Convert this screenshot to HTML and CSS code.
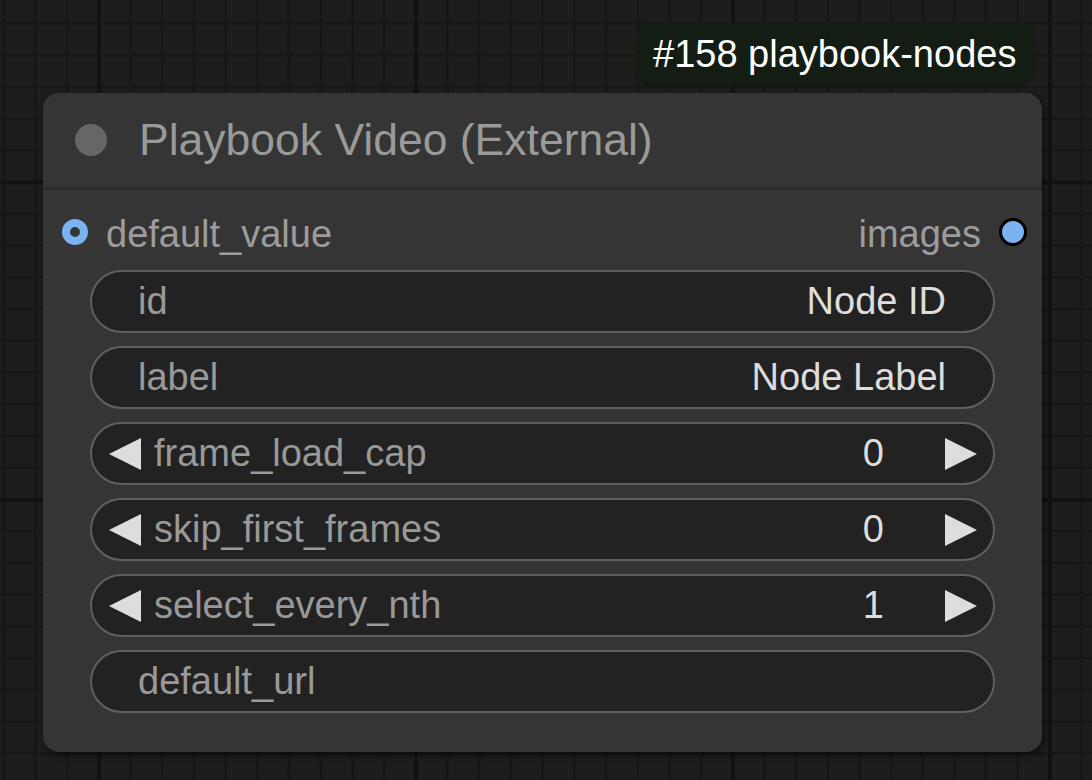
FILE: index.html
```html
<!DOCTYPE html>
<html>
<head>
<meta charset="utf-8">
<link rel="stylesheet" href="styles.css">
</head>
<body>
<div class="canvas">
  <div class="badge">#158 playbook-nodes</div>
  <div class="node">
    <div class="title">
      <span class="title-dot"></span>
      <span class="title-text">Playbook Video (External)</span>
    </div>
    <div class="slots">
      <div class="slot-in">
        <span class="dot-in"></span>
        <span class="slot-label">default_value</span>
      </div>
      <div class="slot-out">
        <span class="slot-label">images</span>
        <span class="dot-out"></span>
      </div>
    </div>
    <div class="widgets">
      <div class="widget text-widget">
        <span class="w-label">id</span>
        <span class="w-value">Node ID</span>
      </div>
      <div class="widget text-widget">
        <span class="w-label">label</span>
        <span class="w-value">Node Label</span>
      </div>
      <div class="widget num-widget">
        <svg class="arrow" viewBox="0 0 32 32"><polygon points="0,16 32,0 32,32"/></svg>
        <span class="w-label">frame_load_cap</span>
        <span class="w-value">0</span>
        <svg class="arrow" viewBox="0 0 32 32"><polygon points="32,16 0,0 0,32"/></svg>
      </div>
      <div class="widget num-widget">
        <svg class="arrow" viewBox="0 0 32 32"><polygon points="0,16 32,0 32,32"/></svg>
        <span class="w-label">skip_first_frames</span>
        <span class="w-value">0</span>
        <svg class="arrow" viewBox="0 0 32 32"><polygon points="32,16 0,0 0,32"/></svg>
      </div>
      <div class="widget num-widget">
        <svg class="arrow" viewBox="0 0 32 32"><polygon points="0,16 32,0 32,32"/></svg>
        <span class="w-label">select_every_nth</span>
        <span class="w-value">1</span>
        <svg class="arrow" viewBox="0 0 32 32"><polygon points="32,16 0,0 0,32"/></svg>
      </div>
      <div class="widget text-widget">
        <span class="w-label">default_url</span>
        <span class="w-value"></span>
      </div>
    </div>
  </div>
</div>
</body>
</html>
```
FILE: styles.css
```css
html, body {
  margin: 0;
  padding: 0;
}
body {
  width: 1092px;
  height: 780px;
  overflow: hidden;
  background-color: #1d1d1d;
  font-family: "Liberation Sans", Arial, sans-serif;
}
.canvas {
  position: relative;
  width: 1092px;
  height: 780px;
  background-color: #1d1d1d;
  background-image:
    linear-gradient(to right, #121212 0 4px, transparent 4px),
    linear-gradient(to bottom, #121212 0 4px, transparent 4px),
    linear-gradient(to right, #171717 0 3px, transparent 3px),
    linear-gradient(to bottom, #171717 0 3px, transparent 3px);
  background-size: 317px 100%, 100% 317.5px, 31.7px 100%, 100% 31.75px;
  background-position: 97px 0, 0 180.5px, 2.4px 0, 0 21.75px;
}
.badge {
  position: absolute;
  left: 635px;
  top: 23px;
  width: 400px;
  height: 62px;
  box-sizing: border-box;
  padding-left: 18px;
  background: #141d13;
  border-radius: 14px;
  color: #ffffff;
  font-size: 38px;
  line-height: 62px;
  white-space: nowrap;
}
.node {
  position: absolute;
  left: 43px;
  top: 93px;
  width: 999px;
  background: #353535;
  border-radius: 16px;
  box-shadow: 2px 3px 6px rgba(0, 0, 0, 0.55);
  padding-bottom: 39px;
}
.title {
  height: 94px;
  border-bottom: 3px solid #2a2a2a;
  display: flex;
  align-items: center;
  padding-left: 32px;
}
.title-dot {
  width: 32px;
  height: 32px;
  border-radius: 50%;
  background: #666666;
  flex: none;
}
.title-text {
  margin-left: 32px;
  font-size: 44.5px;
  color: #9a9a9a;
  white-space: nowrap;
}
.slots {
  height: 80px;
  box-sizing: border-box;
  padding: 4px 15px 0 19px;
  display: flex;
  align-items: center;
  justify-content: space-between;
}
.slot-in, .slot-out {
  display: flex;
  align-items: center;
}
.slot-label {
  font-size: 38px;
  color: #9c9c9c;
  margin-top: 4px;
}
.dot-in {
  width: 10px;
  height: 10px;
  border: 8.5px solid #7ab3ef;
  border-radius: 50%;
  background: #353535;
  margin-right: 18px;
  flex: none;
}
.dot-out {
  width: 22px;
  height: 22px;
  border: 3px solid #000000;
  border-radius: 50%;
  background: #7ab3ef;
  margin-left: 18px;
  flex: none;
}
.widgets {
  display: flex;
  flex-direction: column;
  gap: 13px;
  padding: 0 47px;
}
.widget {
  height: 63px;
  box-sizing: border-box;
  border: 2.5px solid #5f5f5f;
  border-radius: 32px;
  background: #222222;
  display: flex;
  align-items: center;
  font-size: 38px;
  white-space: nowrap;
}
.text-widget {
  padding: 0 47px 0 46px;
}
.num-widget {
  padding: 0 16px 0 17px;
}
.w-label {
  color: #999999;
  flex: 1;
}
.w-value {
  color: #dddddd;
}
.num-widget .w-label {
  margin-left: 13px;
}
.num-widget .w-value {
  margin-right: 61px;
}
.arrow {
  width: 32px;
  height: 32px;
  flex: none;
  fill: #dddddd;
}
```
